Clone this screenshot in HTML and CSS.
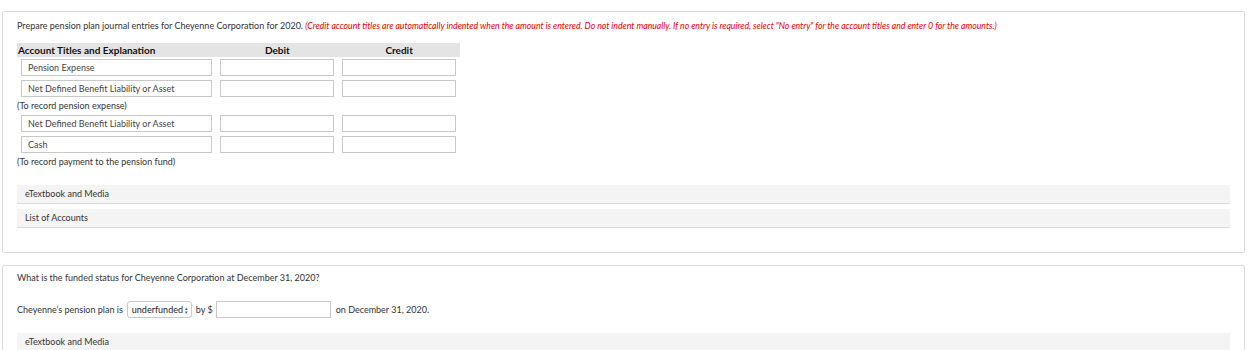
FILE: index.html
```html
<!DOCTYPE html>
<html>
<head>
<meta charset="utf-8">
<link rel="stylesheet" href="styles.css">
</head>
<body>
<div class="card card-one">
  <p class="prompt">Prepare pension plan journal entries for Cheyenne Corporation for 2020. <span class="hint">(Credit account titles are automatically indented when the amount is entered. Do not indent manually. If no entry is required, select "No entry" for the account titles and enter 0 for the amounts.)</span></p>
  <div class="journal">
    <div class="jrow head">
      <div class="c1">Account Titles and Explanation</div>
      <div class="c2">Debit</div>
      <div class="c3">Credit</div>
    </div>
    <div class="jrow">
      <div class="c1"><div class="field acct">Pension Expense</div></div>
      <div class="c2"><div class="field"></div></div>
      <div class="c3"><div class="field"></div></div>
    </div>
    <div class="jrow">
      <div class="c1"><div class="field acct">Net Defined Benefit Liability or Asset</div></div>
      <div class="c2"><div class="field"></div></div>
      <div class="c3"><div class="field"></div></div>
    </div>
    <div class="note">(To record pension expense)</div>
    <div class="jrow">
      <div class="c1"><div class="field acct">Net Defined Benefit Liability or Asset</div></div>
      <div class="c2"><div class="field"></div></div>
      <div class="c3"><div class="field"></div></div>
    </div>
    <div class="jrow">
      <div class="c1"><div class="field acct">Cash</div></div>
      <div class="c2"><div class="field"></div></div>
      <div class="c3"><div class="field"></div></div>
    </div>
    <div class="note">(To record payment to the pension fund)</div>
  </div>
  <div class="bars">
    <div class="bar">eTextbook and Media</div>
    <div class="bar">List of Accounts</div>
  </div>
</div>

<div class="card card-two">
  <p class="prompt">What is the funded status for Cheyenne Corporation at December 31, 2020?</p>
  <div class="status">
    <span>Cheyenne’s pension plan is</span>
    <span class="select">underfunded <span class="arrows">&#x25B4;<br>&#x25BE;</span></span>
    <span>by $</span>
    <span class="field amount"></span>
    <span class="after">on December 31, 2020.</span>
  </div>
  <div class="bars">
    <div class="bar">eTextbook and Media</div>
  </div>
</div>
</body>
</html>
```

FILE: styles.css
```css
html, body {
  margin: 0;
  padding: 0;
  background: #fff;
}
body {
  font-family: Lato, "Open Sans", sans-serif;
  font-size: 9px;
  color: #333;
  overflow: hidden;
}
.card {
  margin-left: 2px;
  border: 1px solid #dcdcdc;
  border-radius: 2px;
  padding: 0 14px;
  box-sizing: border-box;
  width: 1243px;
}
.card-one {
  margin-top: 11px;
  padding-top: 8px;
  padding-bottom: 24px;
}
.card-two {
  margin-top: 12px;
  padding-top: 6px;
}
.prompt {
  margin: 0;
  line-height: 12px;
  height: 12px;
}
.hint {
  color: #e60000;
  font-style: italic;
  font-size: 8.7px;
}
.journal {
  margin-top: 11px;
  width: 443px;
}
.jrow {
  display: flex;
  height: 21px;
  align-items: center;
}
.jrow.head {
  height: 14px;
  background: #e4e4e4;
  font-weight: bold;
  font-size: 10px;
  color: #111;
}
.c1 { width: 199px; }
.c2 { width: 122px; }
.c3 { width: 122px; }
.head .c1 { padding-left: 1px; }
.head .c2, .head .c3 { text-align: center; }
.field {
  height: 17px;
  margin: 0 4px;
  border: 1px solid #c8c8c8;
  box-sizing: border-box;
  background: #fff;
}
.field.acct {
  padding-left: 6px;
  line-height: 15px;
  color: #444;
}
.note {
  height: 14px;
  line-height: 14px;
  color: #333;
}
.bars {
  margin-top: 16px;
  display: flex;
  flex-direction: column;
  gap: 5px;
}
.bar {
  height: 19px;
  line-height: 18px;
  box-sizing: border-box;
  background: #f4f4f4;
  border-bottom: 1px solid #dadada;
  padding-left: 8px;
  color: #333;
}
.status {
  margin-top: 17px;
  display: flex;
  align-items: center;
  height: 17px;
}
.select {
  margin-left: 4px;
  height: 17px;
  width: 65px;
  box-sizing: border-box;
  border: 1px solid #c8c8c8;
  border-radius: 3px;
  padding-left: 4px;
  display: flex;
  align-items: center;
  gap: 2px;
  color: #222;
}
.arrows {
  font-size: 5px;
  line-height: 4px;
  color: #555;
}
.status .select + span {
  margin-left: 4px;
}
.field.amount {
  display: inline-block;
  width: 115px;
  margin: 0 0 0 3px;
}
.after {
  margin-left: 5px;
}
.card-two .bars {
  margin-top: 15px;
}
```
